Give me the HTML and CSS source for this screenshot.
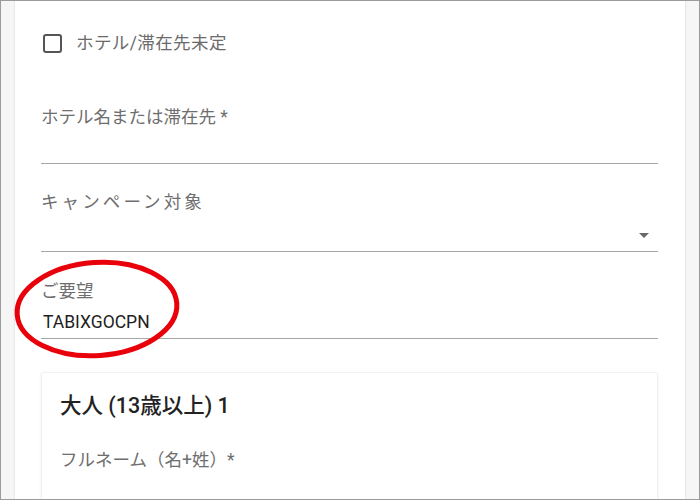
FILE: index.html
```html
<!DOCTYPE html>
<html lang="ja">
<head>
<meta charset="utf-8">
<link rel="stylesheet" href="styles.css">
</head>
<body>
<div class="frame">
  <div class="panel">
    <label class="check-row">
      <span class="checkbox"></span>
      <span class="check-text">ホテル/滞在先未定</span>
    </label>

    <div class="field field-hotel">
      <div class="label">ホテル名または滞在先 *</div>
      <div class="input input-hotel"></div>
    </div>

    <div class="field field-campaign">
      <div class="label label-wide">キャンペーン対象</div>
      <div class="input input-select"><span class="arrow"></span></div>
    </div>

    <div class="field field-request">
      <div class="label">ご要望</div>
      <div class="input input-request">TABIXGOCPN</div>
      <svg class="circle-mark" width="190" height="120" viewBox="0 0 190 120">
        <ellipse cx="95" cy="61" rx="80" ry="46.5" transform="rotate(-4 95 61)" fill="none" stroke="#e8000b" stroke-width="5"/>
      </svg>
    </div>

    <div class="card">
      <div class="card-title">大人 (13歳以上) 1</div>
      <div class="card-label">フルネーム（名+姓）*</div>
    </div>
  </div>
</div>
</body>
</html>
```

FILE: styles.css
```css
* { box-sizing: border-box; }

html, body {
  margin: 0;
  padding: 0;
  background: #ffffff;
}

body {
  font-family: "Roboto", "Noto Sans CJK JP", sans-serif;
}

.frame {
  width: 700px;
  height: 500px;
  border: 1px solid #9b9b9b;
  background: #f6f6f6;
  padding: 0 14px;
  overflow: hidden;
}

.panel {
  height: 100%;
  background: #ffffff;
  box-shadow: 0 0 2px rgba(0, 0, 0, 0.18);
  padding: 30px 27px 0 26px;
}

.check-row {
  display: flex;
  align-items: center;
  height: 24px;
  gap: 14px;
  padding-left: 2px;
}

.checkbox {
  width: 19px;
  height: 19px;
  border: 2px solid #555555;
  border-radius: 3px;
  flex: none;
}

.check-text {
  font-size: 17.5px;
  color: #6b6b6b;
  line-height: 24px;
  letter-spacing: 0.4px;
}

.field {
  position: relative;
}

.field-hotel { margin-top: 50px; }
.field-campaign { margin-top: 26px; }
.field-request { margin-top: 27px; }

.label {
  font-size: 17.5px;
  line-height: 24px;
  color: #6e6e6e;
  white-space: nowrap;
}

.label-wide {
  letter-spacing: 3.1px;
}

.input {
  border-bottom: 1px solid #a6a6a6;
}

.input-hotel {
  height: 35px;
}

.input-select {
  height: 38px;
  display: flex;
  justify-content: flex-end;
  align-items: flex-end;
  padding: 0 9px 13px 0;
}

.arrow {
  width: 0;
  height: 0;
  border-left: 5px solid transparent;
  border-right: 5px solid transparent;
  border-top: 5px solid #6a6a6a;
}

.input-request {
  height: 36px;
  padding-top: 7px;
  font-size: 17.5px;
  line-height: 24px;
  color: #1e1e1e;
  padding-left: 2px;
}

.circle-mark {
  position: absolute;
  left: -39px;
  top: -31px;
  pointer-events: none;
}

.card {
  margin-top: 33px;
  height: 200px;
  border: 1px solid #f1f1f1;
  border-radius: 2px;
  box-shadow: 0 1px 3px rgba(0, 0, 0, 0.07);
  padding: 19px 18px 0 18px;
}

.card-title {
  font-size: 21.5px;
  font-weight: 500;
  line-height: 28px;
  color: #222222;
}

.card-label {
  margin-top: 28px;
  font-size: 17.5px;
  line-height: 24px;
  color: #6e6e6e;
}
```
